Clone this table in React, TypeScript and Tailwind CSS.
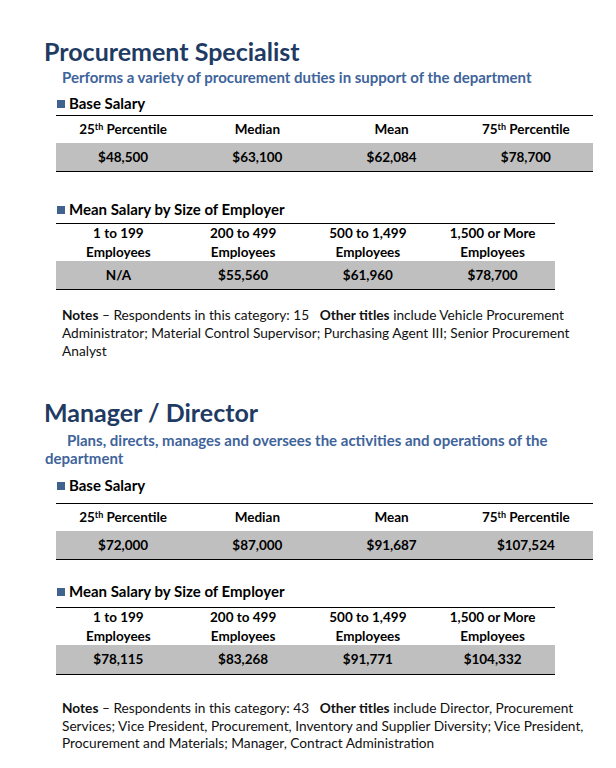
import React from 'react'

type Section = {
  title: string
  subtitle: string[]
  subtitleIndent: boolean
  base: string[]
  employer: string[]
  respondents: string
  notes: string[]
}

const SECTIONS: Section[] = [
  {
    title: 'Procurement Specialist',
    subtitle: ['Performs a variety of procurement duties in support of the department'],
    subtitleIndent: false,
    base: ['$48,500', '$63,100', '$62,084', '$78,700'],
    employer: ['N/A', '$55,560', '$61,960', '$78,700'],
    respondents: '15',
    notes: [
      'include Vehicle Procurement',
      'Administrator; Material Control Supervisor; Purchasing Agent III; Senior Procurement',
      'Analyst'
    ]
  },
  {
    title: 'Manager / Director',
    subtitle: ['Plans, directs, manages and oversees the activities and operations of the', 'department'],
    subtitleIndent: true,
    base: ['$72,000', '$87,000', '$91,687', '$107,524'],
    employer: ['$78,115', '$83,268', '$91,771', '$104,332'],
    respondents: '43',
    notes: [
      'include Director, Procurement',
      'Services; Vice President, Procurement, Inventory and Supplier Diversity; Vice President,',
      'Procurement and Materials; Manager, Contract Administration'
    ]
  }
]

const EMPLOYER_SIZES = [
  ['1 to 199', 'Employees'],
  ['200 to 499', 'Employees'],
  ['500 to 1,499', 'Employees'],
  ['1,500 or More', 'Employees']
]

function Label({ text, className }: { text: string; className: string }) {
  return (
    <div className={`flex items-center ml-[57px] h-[18px] leading-[18px] ${className}`}>
      <span className="w-[8px] h-[8px] bg-[#41618f] mr-[4px] mt-[1px]" />
      <span className="text-[15px] font-bold text-black">{text}</span>
    </div>
  )
}

function Percentile({ n }: { n: string }) {
  return (
    <span>
      {n}
      <sup className="text-[9px]">th</sup> Percentile
    </span>
  )
}

function JobSection({ s, first }: { s: Section; first: boolean }) {
  return (
    <div className={first ? 'pt-[37px]' : 'pt-[38px]'}>
      <h1 className="ml-[44px] text-[25px] leading-[29px] font-bold text-[#1f3b63]">{s.title}</h1>

      <div
        className={`text-[15px] leading-[18px] font-bold text-[#40649a] ${
          first ? 'mt-[2px] ml-[62px]' : 'mt-[4px] ml-[45px]'
        }`}
      >
        {s.subtitle.map((line, i) => (
          <div key={i} className={`whitespace-nowrap ${s.subtitleIndent && i === 0 ? 'pl-[22px]' : ''}`}>
            {line}
          </div>
        ))}
      </div>

      <Label text="Base Salary" className={first ? 'mt-[8px]' : 'mt-[9px]'} />

      <div
        className={`ml-[56px] w-[537px] text-[13.5px] font-bold text-black text-center ${
          first ? 'mt-[3px]' : 'mt-[9px]'
        }`}
      >
        <div className="grid grid-cols-4 items-center h-[28px] border-t border-black">
          <Percentile n="25" />
          <span>Median</span>
          <span>Mean</span>
          <Percentile n="75" />
        </div>
        <div className="grid grid-cols-4 items-center h-[29px] bg-[#bfbfbf] border-b border-black">
          {s.base.map(v => (
            <span key={v}>{v}</span>
          ))}
        </div>
      </div>

      <Label text="Mean Salary by Size of Employer" className={first ? 'mt-[28px]' : 'mt-[22px]'} />

      <div
        className={`ml-[56px] w-[499px] text-[13.5px] font-bold text-black text-center ${
          first ? 'mt-[5px]' : 'mt-[7px]'
        }`}
      >
        <div className="grid grid-cols-4 items-center h-[38px] border-t border-black leading-[19px]">
          {EMPLOYER_SIZES.map(([a, b]) => (
            <div key={a}>
              <div>{a}</div>
              <div>{b}</div>
            </div>
          ))}
        </div>
        <div
          className={`grid grid-cols-4 items-center bg-[#bfbfbf] border-b border-black ${
            first ? 'h-[29px]' : 'h-[30px]'
          }`}
        >
          {s.employer.map(v => (
            <span key={v}>{v}</span>
          ))}
        </div>
      </div>

      <div
        className={`ml-[62px] text-[13.7px] text-[#111] ${
          first ? 'mt-[16px] leading-[18px]' : 'mt-[24px] leading-[17.5px]'
        }`}
      >
        {s.notes.map((line, i) => (
          <div key={i} className="whitespace-nowrap">
            {i === 0 && (
              <>
                <b>Notes</b> – Respondents in this category: {s.respondents}
                {'\u00a0\u00a0 '}
                <b>Other titles</b>{' '}
              </>
            )}
            {line}
          </div>
        ))}
      </div>
    </div>
  )
}

export default function App() {
  return (
    <div className="w-[616px] h-[768px] overflow-hidden bg-white font-[family-name:Lato,sans-serif]">
      {SECTIONS.map((s, i) => (
        <JobSection key={s.title} s={s} first={i === 0} />
      ))}
    </div>
  )
}
